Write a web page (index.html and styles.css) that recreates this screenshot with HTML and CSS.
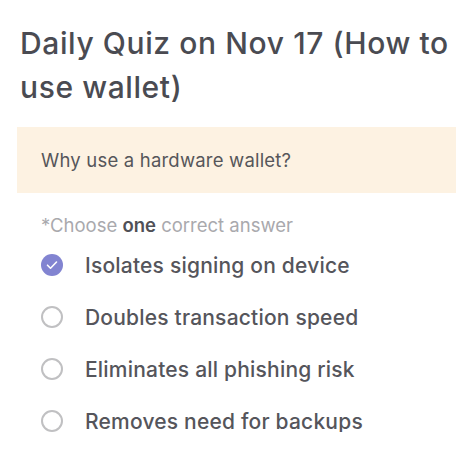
FILE: index.html
```html
<!DOCTYPE html>
<html lang="en">
<head>
<meta charset="utf-8">
<title>Daily Quiz</title>
<link rel="stylesheet" href="styles.css">
</head>
<body>
<main class="quiz">
  <h1 class="quiz-title">Daily Quiz on Nov 17 (How to use wallet)</h1>
  <div class="question">Why use a hardware wallet?</div>
  <p class="hint">*Choose <b>one</b> correct answer</p>
  <ul class="options">
    <li class="option is-checked">
      <span class="radio">
        <svg viewBox="0 0 22 22" width="22" height="22"><path d="M6.5 11.2l3 3 6-6.2" fill="none" stroke="#fff" stroke-width="1.6" stroke-linecap="round" stroke-linejoin="round"/></svg>
      </span>
      <span class="label">Isolates signing on device</span>
    </li>
    <li class="option">
      <span class="radio"></span>
      <span class="label">Doubles transaction speed</span>
    </li>
    <li class="option">
      <span class="radio"></span>
      <span class="label">Eliminates all phishing risk</span>
    </li>
    <li class="option">
      <span class="radio"></span>
      <span class="label">Removes need for backups</span>
    </li>
  </ul>
</main>
</body>
</html>
```
FILE: styles.css
```css
html, body {
  margin: 0;
  padding: 0;
  background: #fff;
}

body {
  font-family: Inter, "Noto Sans", sans-serif;
  color: #4b4b52;
}

.quiz {
  padding: 21px 18px 0 17px;
}

.quiz-title {
  margin: 0 0 0 3px;
  font-size: 30px;
  line-height: 44px;
  font-weight: 500;
  letter-spacing: 0.6px;
  color: #4a4b52;
}

.question {
  margin-top: 18px;
  height: 66px;
  display: flex;
  align-items: center;
  padding-left: 24px;
  background: #fdf2e2;
  font-size: 18.5px;
  letter-spacing: 0.2px;
  color: #56565a;
}

.hint {
  margin: 19px 0 0 24px;
  font-size: 18.5px;
  line-height: 26px;
  color: #a9a9ad;
}

.hint b {
  font-weight: 600;
  color: #505056;
}

.options {
  list-style: none;
  margin: 16px 0 0 24px;
  padding: 0;
  display: flex;
  flex-direction: column;
  gap: 30px;
}

.option {
  display: flex;
  align-items: center;
  gap: 22px;
  height: 22px;
  font-size: 21px;
  font-weight: 500;
  letter-spacing: 0.2px;
  color: #55555b;
}

.radio {
  width: 22px;
  height: 22px;
  box-sizing: border-box;
  border: 2px solid #c0c0c2;
  border-radius: 50%;
  flex: none;
  display: flex;
}

.option.is-checked .radio {
  border: none;
  background: #8284d1;
}
```
